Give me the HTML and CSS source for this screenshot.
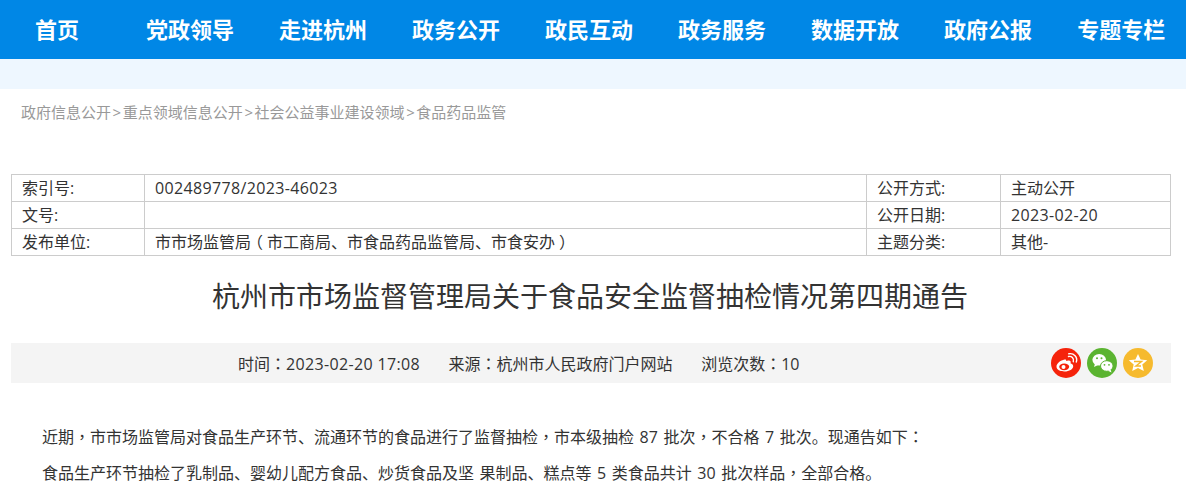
FILE: index.html
```html
<!DOCTYPE html>
<html lang="zh-CN">
<head>
<meta charset="utf-8">
<title>杭州市市场监督管理局关于食品安全监督抽检情况第四期通告</title>
<link rel="stylesheet" href="styles.css">
</head>
<body>
<nav class="nav">
  <a class="nav-item nav-home">首页</a>
  <a class="nav-item">党政领导</a>
  <a class="nav-item">走进杭州</a>
  <a class="nav-item">政务公开</a>
  <a class="nav-item">政民互动</a>
  <a class="nav-item">政务服务</a>
  <a class="nav-item">数据开放</a>
  <a class="nav-item">政府公报</a>
  <a class="nav-item">专题专栏</a>
</nav>
<div class="band"></div>
<div class="crumbs">政府信息公开<span class="sep">&gt;</span>重点领域信息公开<span class="sep">&gt;</span>社会公益事业建设领域<span class="sep">&gt;</span>食品药品监管</div>
<table class="meta">
  <colgroup><col class="c1"><col class="c2"><col class="c3"><col class="c4"></colgroup>
  <tr><td>索引号:</td><td><span class="num">002489778/2023-46023</span></td><td>公开方式:</td><td>主动公开</td></tr>
  <tr><td>文号:</td><td></td><td>公开日期:</td><td><span class="num">2023-02-20</span></td></tr>
  <tr><td>发布单位:</td><td>市市场监管局<span class="paren">（</span>市工商局、市食品药品监管局、市食安办<span class="paren">）</span></td><td>主题分类:</td><td>其他-</td></tr>
</table>
<h1 class="title">杭州市市场监督管理局关于食品安全监督抽检情况第四期通告</h1>
<div class="info">
  <div class="info-text">
    <span>时间<span class="cp" lang="zh-Hant">：</span><span class="num">2023-02-20 17:08</span></span>
    <span>来源<span class="cp" lang="zh-Hant">：</span>杭州市人民政府门户网站</span>
    <span>浏览次数<span class="cp" lang="zh-Hant">：</span>10</span>
  </div>
  <div class="share">
    <svg class="icon" viewBox="0 0 30 30"><circle cx="15" cy="15" r="15" fill="#f5230b"/><path d="M12.800 11.800c-4 .9-7.300 4-7.300 7 0 2.900 3.700 4.700 8 4.700 4.800 0 8.700-2.500 8.700-5.300 0-1.700-1.500-2.500-2.700-2.900.5-1.300.3-2.500-1.300-2.800-1.100-.2-2.400.3-3 .6.400-1.500-.6-2.100-2.400-1.300z" fill="#fff"/><ellipse cx="13.200" cy="18.800" rx="5" ry="3.400" fill="#f5230b"/><circle cx="12.500" cy="19" r="2" fill="#fff"/><path d="M17.500 8.500c3-.8 5.800 2 4.800 5.200M17.800 5.800c5-1.100 9.200 3.400 7.500 8.300" fill="none" stroke="#fff" stroke-width="1.400" stroke-linecap="round"/></svg>
    <svg class="icon" viewBox="0 0 30 30"><circle cx="15" cy="15" r="15" fill="#5bb431"/><ellipse cx="12.200" cy="11.800" rx="6.800" ry="5.800" fill="#fff"/><path d="M8 15.500l-1 3.500 4-2z" fill="#fff"/><ellipse cx="19.800" cy="18" rx="6.300" ry="5.300" fill="#fff" stroke="#5bb431"/><path d="M23.500 21.500l1 3-3.500-1.800z" fill="#fff"/><circle cx="10" cy="10.300" r="1" fill="#5bb431"/><circle cx="14.500" cy="10.300" r="1" fill="#5bb431"/><circle cx="17.500" cy="16.800" r=".9" fill="#5bb431"/><circle cx="22" cy="16.800" r=".9" fill="#5bb431"/></svg>
    <svg class="icon" viewBox="0 0 30 30"><circle cx="15" cy="15" r="15" fill="#f6ba2e"/><path d="M15 6l2.600 5.600 6.600.7-4.900 4.300 1.500 6.500-5.800-3.200-5.800 3.200 1.500-6.500-4.900-4.300 6.600-.7z" fill="#fff"/><path d="M11 13.500h7.500l-5.500 4.500h5" fill="none" stroke="#f6ba2e" stroke-width="1.500"/></svg>
  </div>
</div>
<article class="body">
  <p>近期<span class="cp" lang="zh-Hant">，</span>市市场监管局对食品生产环节、流通环节的食品进行了监督抽检<span class="cp" lang="zh-Hant">，</span>市本级抽检 87 批次<span class="cp" lang="zh-Hant">，</span>不合格 7 批次。现通告如下<span class="cp" lang="zh-Hant">：</span></p>
  <p>食品生产环节抽检了乳制品、婴幼儿配方食品、炒货食品及坚 果制品、糕点等 5 类食品共计 30 批次样品<span class="cp" lang="zh-Hant">，</span>全部合格。</p>
</article>
</body>
</html>
```
FILE: styles.css
```css
* { box-sizing: border-box; }
html, body { margin: 0; padding: 0; height: 491px; overflow: hidden; background: #fff; }
body { font-family: "Open Sans", "Noto Sans CJK SC", sans-serif; color: #333; }
.cp { font-family: "Noto Sans CJK TC", sans-serif; }
.num { letter-spacing: .35px; }
.paren { font-feature-settings: "halt"; padding: 0 4px; }
.nav { display: flex; height: 59px; background: #0087e6; padding-left: 12.5px; white-space: nowrap; }
.nav-item { flex: none; padding: 0 22.5px; font-size: 22px; font-weight: 700; line-height: 58px; color: #fff; }
.nav-home { margin-right: 22px; }
.band { height: 30px; background: #eef7ff; }
.crumbs { margin: 14px 0 0 21px; font-size: 15px; line-height: 19px; color: #999; }
.sep { margin: 0 1.6px; }
.meta { width: 1159px; margin: 52px 0 0 11px; border-collapse: collapse; table-layout: fixed; font-size: 16px; color: #333; }
.c1 { width: 133px; } .c2 { width: 722px; } .c3 { width: 134px; } .c4 { width: 170px; }
.meta td { height: 27px; padding: 0 10px; border: 1px solid #ccc; line-height: 26px; white-space: nowrap; }
.title { margin: 22px 0 0; padding-right: 6px; font-size: 28px; font-weight: 400; line-height: 36px; text-align: center; color: #333; }
.info { display: flex; align-items: center; width: 1160px; height: 40px; margin: 29px 0 0 11px; background: #f4f4f4; }
.info-text { flex: 1; display: flex; gap: 28.5px; padding-left: 227px; font-size: 16px; white-space: nowrap; }
.share { display: flex; gap: 6px; padding-right: 18px; }
.icon { display: block; width: 30px; height: 30px; }
.body { margin: 0; padding: 0 42px; }
.body p { margin: 0; font-size: 16px; line-height: 35px; word-spacing: 1.4px; color: #333; white-space: nowrap; }
.body p:first-child { margin-top: 36px; }
```
